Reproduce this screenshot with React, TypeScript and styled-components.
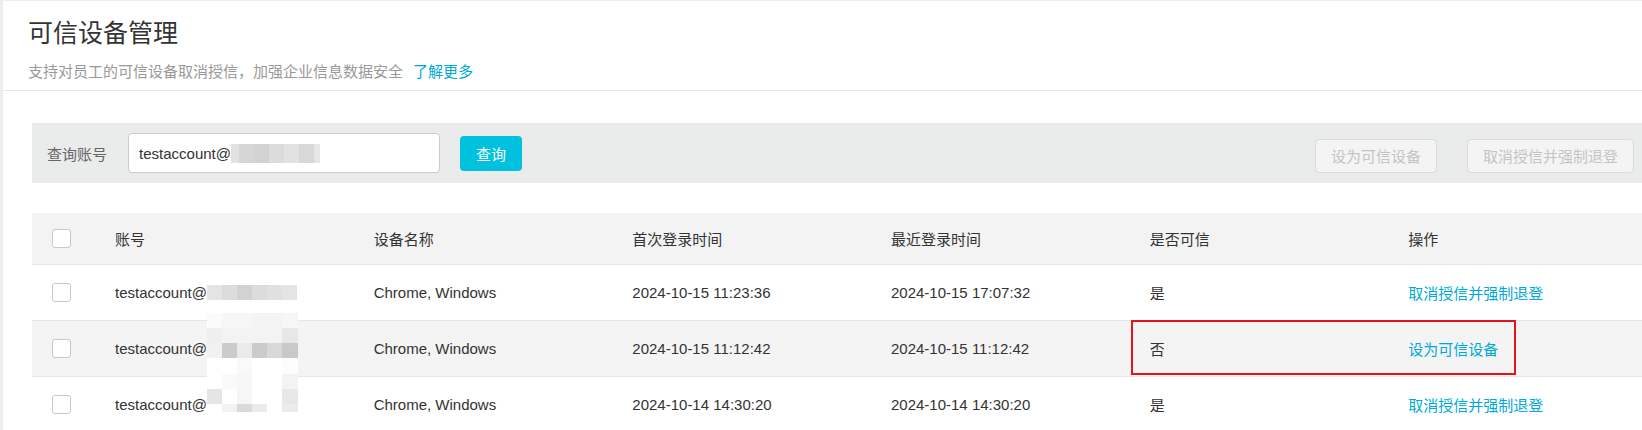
import React from "react";
import styled, { createGlobalStyle } from "styled-components";

const GlobalStyle = createGlobalStyle`
  html, body {
    margin: 0;
    padding: 0;
    background: #eeeeee;
  }
  body {
    font-family: "Liberation Sans", "Noto Sans CJK SC", sans-serif;
    color: #333;
  }
  * { box-sizing: border-box; }
`;

const Page = styled.div`
  height: 430px;
  overflow: hidden;
  padding: 1px 0 0 3px;
  background: #eeeeee;
`;

const Card = styled.div`
  background: #fff;
  height: 100%;
`;

const Header = styled.header`
  padding: 15px 25px 8px;
  border-bottom: 1px solid #e6e6e6;
`;

const Title = styled.h1`
  margin: 0;
  font-size: 25px;
  line-height: 34px;
  font-weight: normal;
  color: #333;
`;

const Subtitle = styled.p`
  margin: 12px 0 0;
  font-size: 15px;
  line-height: 20px;
  color: #999;
`;

const Link = styled.a`
  color: #00aad6;
  text-decoration: none;
  margin-left: ${(p: { $ml?: number }) => p.$ml ?? 0}px;
  cursor: pointer;
`;

const Main = styled.main`
  padding: 32px 0 0 29px;
`;

const Toolbar = styled.div`
  display: flex;
  align-items: center;
  height: 60px;
  background: #eaebeb;
  padding: 0 8px 0 15px;
  margin-bottom: 30px;
`;

const Label = styled.span`
  font-size: 15px;
  color: #666;
  margin-right: 21px;
`;

const SearchField = styled.div`
  display: flex;
  align-items: center;
  width: 312px;
  height: 40px;
  padding-left: 10px;
  background: #fff;
  border: 1px solid #cccccc;
  border-radius: 4px;
  font-size: 15px;
  color: #333;
`;

const QueryButton = styled.button`
  margin-left: 20px;
  width: 62px;
  height: 35px;
  border: none;
  border-radius: 4px;
  background: #00c1de;
  color: #fff;
  font-family: inherit;
  font-size: 15px;
  cursor: pointer;
`;

const Spacer = styled.div`
  flex: 1;
`;

const GhostButton = styled.button<{ $gap?: number }>`
  height: 34px;
  margin-top: 5px;
  margin-left: ${(p) => p.$gap ?? 0}px;
  padding: 0 15px;
  background: #f4f4f4;
  border: 1px solid #dadada;
  border-radius: 4px;
  color: #c4c4c4;
  font-family: inherit;
  font-size: 15px;
`;

const Table = styled.div`
  position: relative;
`;

const HeadRow = styled.div`
  display: grid;
  grid-template-columns: 58px repeat(6, 1fr);
  align-items: center;
  height: 52px;
  background: #f3f3f3;
  border-bottom: 1px solid #e6e6e6;
`;

const Row = styled.div<{ $alt?: boolean }>`
  position: relative;
  display: grid;
  grid-template-columns: 58px repeat(6, 1fr);
  align-items: center;
  height: 56px;
  background: ${(p) => (p.$alt ? "#f4f4f4" : "#fff")};
  border-bottom: 1px solid #e6e6e6;
`;

const Cell = styled.div`
  display: flex;
  align-items: center;
  padding-left: 25px;
  font-size: 15px;
  color: #333;
  white-space: nowrap;
`;

const CheckCell = styled.div`
  display: flex;
  align-items: center;
  padding-left: 20px;
`;

const Checkbox = styled.span`
  display: block;
  width: 19px;
  height: 19px;
  background: #fff;
  border: 1px solid #c8c8c8;
  border-radius: 3px;
`;

const Highlight = styled.div`
  position: absolute;
  left: 1099px;
  top: -1px;
  width: 385px;
  height: 55px;
  border: 2px solid #e3141e;
  pointer-events: none;
`;

const MosaicGrid = styled.div<{ $cols: string; $rows: string }>`
  display: inline-grid;
  grid-template-columns: ${(p) => p.$cols};
  grid-template-rows: ${(p) => p.$rows};
  flex-shrink: 0;
`;

const Tile = styled.span<{ $c: string }>`
  background: ${(p) => p.$c};
`;

const OverlayMosaic = styled(MosaicGrid)`
  position: absolute;
  left: 175px;
  top: 100px;
`;

function Mosaic({
  cols,
  rows,
  colors,
  as,
}: {
  cols: number[];
  rows: number[];
  colors: string[][];
  as?: "overlay";
}) {
  const C = as === "overlay" ? OverlayMosaic : MosaicGrid;
  return (
    <C $cols={cols.map((c) => c + "px").join(" ")} $rows={rows.map((r) => r + "px").join(" ")}>
      {colors.flatMap((row, i) => row.map((c, j) => <Tile key={i + "-" + j} $c={c} />))}
    </C>
  );
}

const inputMosaic = [["#e2e2e2", "#d6d6d6", "#d2d2d2", "#dcdcdc", "#e2e2e2", "#d8d8d8", "#e6e6e6"]];
const row1Mosaic = [["#e4e4e4", "#dcdcdc", "#d1d3d3", "#dcdcdc", "#e0e0e0", "#e4e4e6"]];
const overlayColors = [
  ["#fbfbfb", "#f6f6f6", "#f6f6f6", "#f4f4f4", "#f4f4f4", "#f6f6f6"],
  ["#efefef", "#f3f3f3", "#f3f3f3", "#f3f3f3", "#f3f3f3", "#e7e7e7"],
  ["#f1f1f1", "#cbcbcb", "#eaeaea", "#cbcbcb", "#d8d8d6", "#c9c9cb"],
  ["#ffffff", "#ffffff", "#f9f9f9", "#ffffff", "#ffffff", "#fcfcfc"],
  ["#ffffff", "#f9f9f9", "#f7f7f7", "#ffffff", "#ffffff", "#f3f3f3"],
  ["#e5e5e5", "#ffffff", "#f6f6f6", "#ffffff", "#ffffff", "#e7e7e7"],
  ["#ffffff", "#f3f3f3", "#dadada", "#ebebeb", "#ffffff", "#ebebeb"],
];

const rows = [
  { first: "2024-10-15 11:23:36", last: "2024-10-15 17:07:32", trusted: true },
  { first: "2024-10-15 11:12:42", last: "2024-10-15 11:12:42", trusted: false },
  { first: "2024-10-14 14:30:20", last: "2024-10-14 14:30:20", trusted: true },
];

export default function App() {
  return (
    <>
      <GlobalStyle />
      <Page>
        <Card>
          <Header>
            <Title>可信设备管理</Title>
            <Subtitle>
              支持对员工的可信设备取消授信，加强企业信息数据安全
              <Link $ml={10}>了解更多</Link>
            </Subtitle>
          </Header>
          <Main>
            <Toolbar>
              <Label>查询账号</Label>
              <SearchField>
                testaccount@
                <Mosaic cols={[8, 15, 15, 15, 15, 15, 6]} rows={[19]} colors={inputMosaic} />
              </SearchField>
              <QueryButton>查询</QueryButton>
              <Spacer />
              <GhostButton disabled>设为可信设备</GhostButton>
              <GhostButton disabled $gap={30}>
                取消授信并强制退登
              </GhostButton>
            </Toolbar>
            <Table>
              <HeadRow>
                <CheckCell>
                  <Checkbox />
                </CheckCell>
                <Cell>账号</Cell>
                <Cell>设备名称</Cell>
                <Cell>首次登录时间</Cell>
                <Cell>最近登录时间</Cell>
                <Cell>是否可信</Cell>
                <Cell>操作</Cell>
              </HeadRow>
              {rows.map((r, i) => (
                <Row key={i} $alt={i === 1}>
                  <CheckCell>
                    <Checkbox />
                  </CheckCell>
                  <Cell>
                    testaccount@
                    {i === 0 && (
                      <Mosaic cols={[15, 15, 15, 15, 15, 15]} rows={[15]} colors={row1Mosaic} />
                    )}
                  </Cell>
                  <Cell>Chrome, Windows</Cell>
                  <Cell>{r.first}</Cell>
                  <Cell>{r.last}</Cell>
                  <Cell>{r.trusted ? "是" : "否"}</Cell>
                  <Cell>
                    <Link>{r.trusted ? "取消授信并强制退登" : "设为可信设备"}</Link>
                  </Cell>
                  {!r.trusted && <Highlight />}
                </Row>
              ))}
              <Mosaic
                as="overlay"
                cols={[15, 15, 15, 15, 15, 16]}
                rows={[15, 15, 15, 16, 15, 15, 8]}
                colors={overlayColors}
              />
            </Table>
          </Main>
        </Card>
      </Page>
    </>
  );
}
